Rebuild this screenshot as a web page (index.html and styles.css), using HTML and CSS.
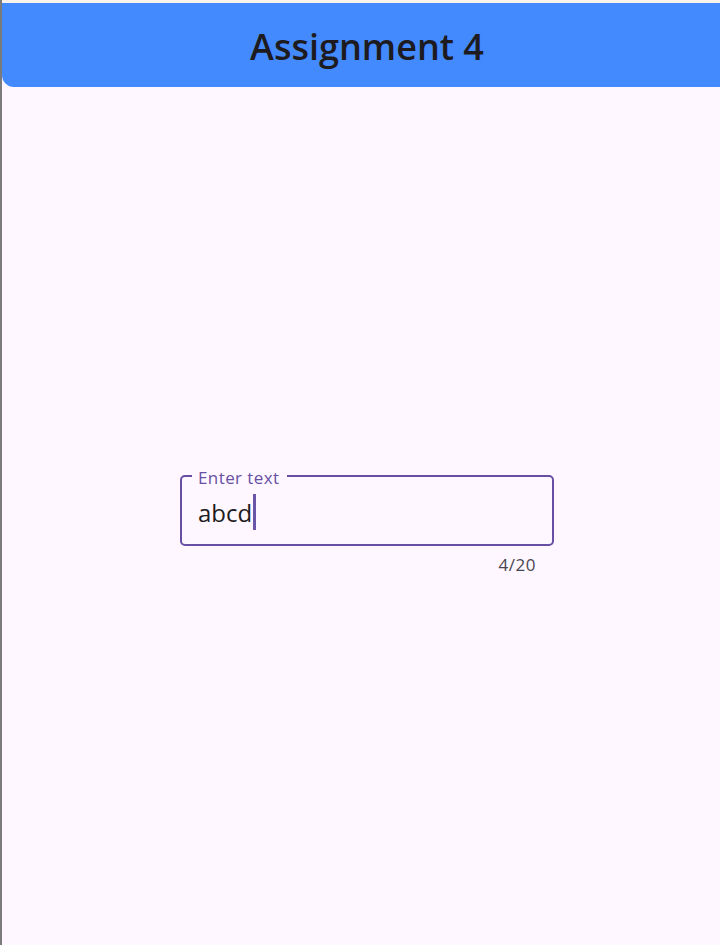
FILE: index.html
```html
<!DOCTYPE html>
<html lang="en">
<head>
<meta charset="utf-8">
<title>Assignment 4</title>
<link rel="stylesheet" href="styles.css">
</head>
<body>
<div class="topstrip"></div>
<header class="appbar"><h1 class="title">Assignment 4</h1></header>
<main class="content">
  <div class="field-wrap">
    <fieldset class="field">
      <legend class="label">Enter text</legend>
      <div class="value"><span>abcd</span><span class="caret"></span></div>
    </fieldset>
    <div class="counter">4/20</div>
  </div>
</main>
</body>
</html>
```

FILE: styles.css
```css
html, body {
  margin: 0;
  padding: 0;
  height: 100%;
}
body {
  background: #fef7ff;
  border-left: 2px solid #7b7b7b;
  font-family: "Open Sans", "Noto Sans", sans-serif;
  box-sizing: border-box;
  overflow: hidden;
}
.topstrip {
  height: 3px;
  background: #faf3ec;
}
.appbar {
  height: 84px;
  background: #448aff;
  border-bottom-left-radius: 12px;
  display: flex;
  align-items: center;
  justify-content: center;
}
.title {
  margin: 0;
  font-size: 36px;
  font-weight: 600;
  color: #1d1b20;
  padding-left: 12px;
  padding-top: 3px;
}
.content {
  padding-top: 378px;
  padding-left: 178px;
}
.field-wrap {
  width: 374px;
}
.field {
  margin: 0;
  height: 81px;
  box-sizing: border-box;
  border: 2px solid #6750a4;
  border-radius: 5px;
  padding: 0 0 0 16px;
}
.label {
  padding: 4px 8px 0 6px;
  margin-left: -6px;
  font-size: 17px;
  letter-spacing: 0.4px;
  color: #6750a4;
  line-height: 18px;
}
.value {
  display: flex;
  align-items: center;
  font-size: 24px;
  color: #1d1b20;
  height: 36px;
  margin-top: 7px;
}
.caret {
  display: inline-block;
  width: 3px;
  height: 36px;
  background: #6a55a8;
  margin-left: 1px;
}
.counter {
  text-align: right;
  padding-right: 18px;
  margin-top: 7px;
  font-size: 17px;
  letter-spacing: 0.5px;
  color: #49454f;
}
```
